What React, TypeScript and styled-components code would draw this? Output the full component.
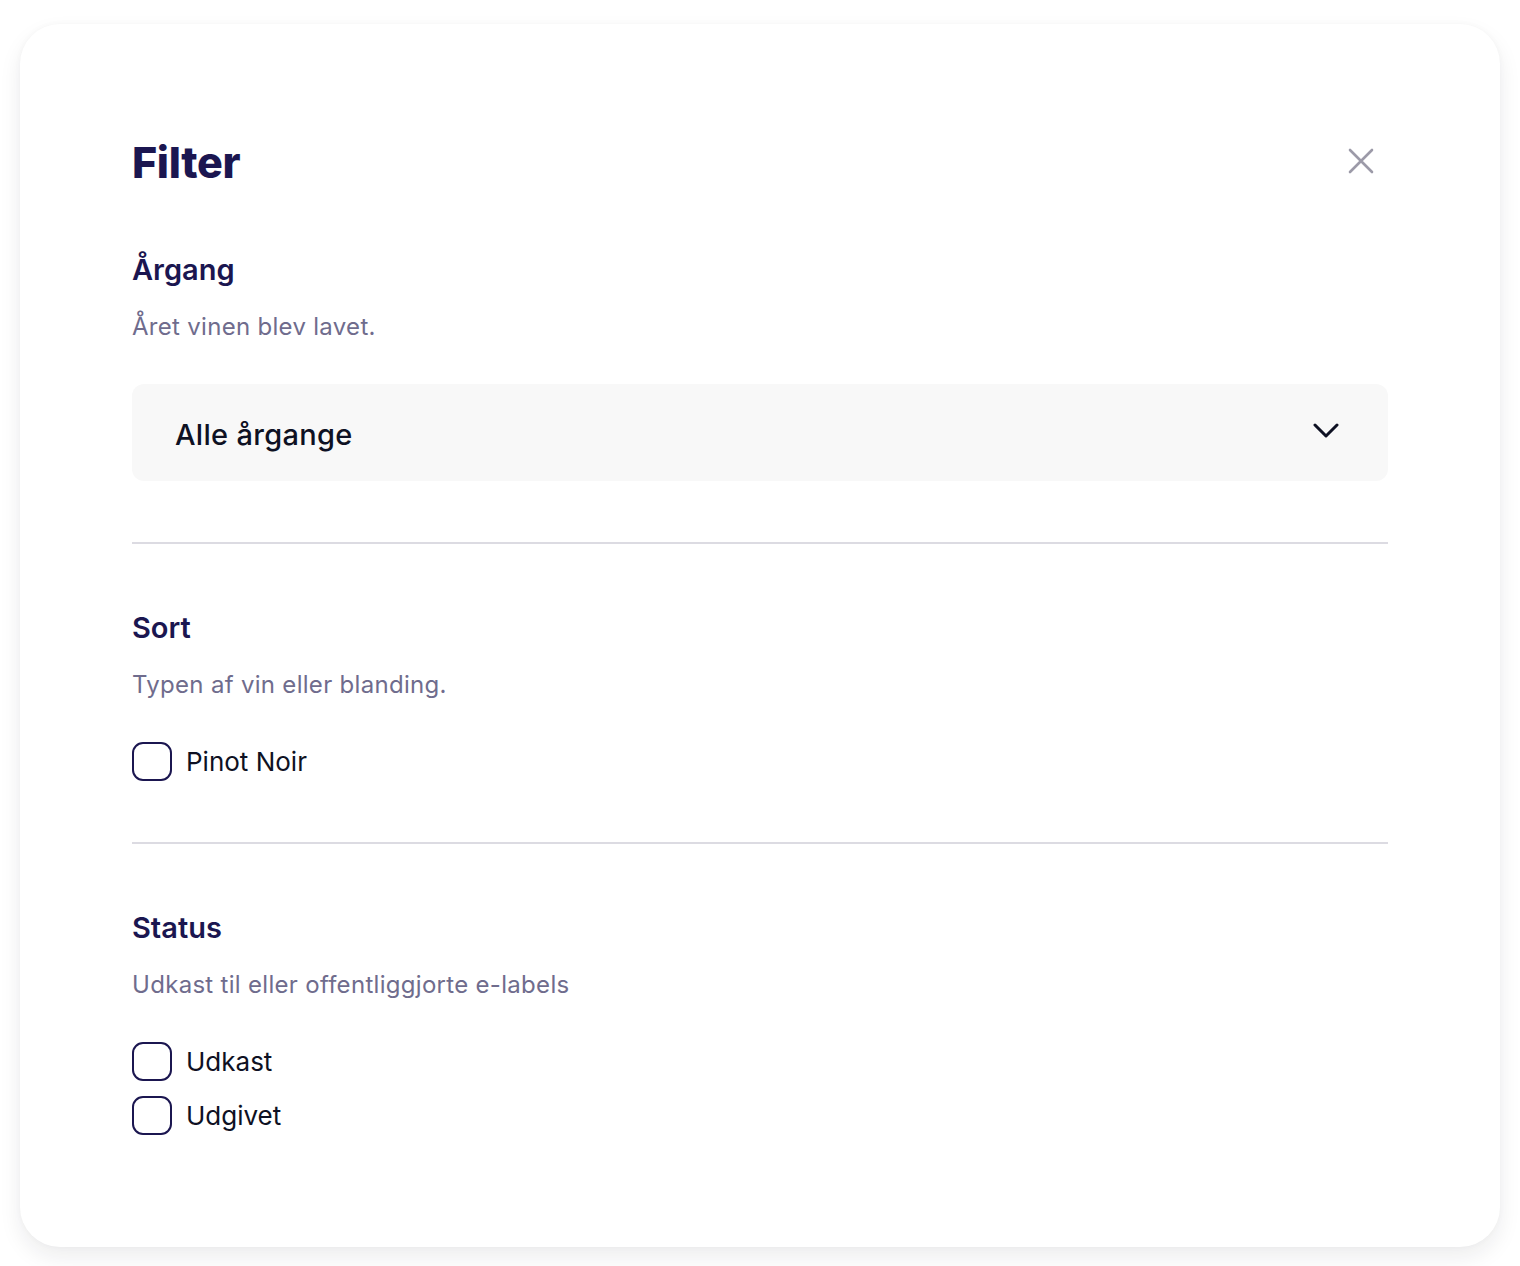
import React from "react";
import styled, { createGlobalStyle } from "styled-components";

const Global = createGlobalStyle`
  html, body { margin: 0; padding: 0; background: #ffffff; }
  body { font-family: "Inter", "Lato", sans-serif; -webkit-font-smoothing: antialiased; }
  * { box-sizing: border-box; }
`;

const Page = styled.div`
  padding: 24px 20px 20px;
`;

const Card = styled.div`
  background: #ffffff;
  border-radius: 40px;
  box-shadow: 0 10px 22px rgba(20, 20, 40, 0.08), 0 0 6px rgba(20, 20, 40, 0.03);
  padding: 112px 112px 112px;
  display: flex;
  flex-direction: column;
`;

const Header = styled.div`
  display: flex;
  align-items: center;
  justify-content: space-between;
  height: 52px;
  margin-bottom: 64px;
`;

const Title = styled.h1`
  margin: 0;
  font-family: "Inter", sans-serif;
  font-size: 43px;
  line-height: 52px;
  font-weight: 800;
  letter-spacing: -0.3px;
  color: #1b1650;
`;

const CloseButton = styled.button`
  border: none;
  background: transparent;
  padding: 0;
  width: 32px;
  height: 32px;
  margin-right: 11px;
  margin-top: -3px;
  display: flex;
  align-items: center;
  justify-content: center;
  cursor: pointer;
`;

const Section = styled.section`
  display: flex;
  flex-direction: column;
`;

const SectionTitle = styled.h2`
  margin: 0;
  font-size: 29px;
  line-height: 36px;
  font-weight: 600;
  color: #1b1650;
  letter-spacing: 0;
`;

const SectionDesc = styled.p`
  margin: 23px 0 41px;
  font-size: 24px;
  line-height: 32px;
  font-weight: 400;
  color: #6f6c8d;
  letter-spacing: 0.3px;
`;

const Select = styled.div`
  height: 97px;
  background: #f8f8f8;
  border-radius: 12px;
  padding: 0 49px 0 43px;
  display: flex;
  align-items: center;
  justify-content: space-between;
`;

const SelectValue = styled.span`
  font-size: 29px;
  font-weight: 500;
  color: #0e1123;
  letter-spacing: 0.3px;
  margin-top: 4px;
`;

const SelectIcon = styled.span`
  display: flex;
  margin-top: -4px;
`;

const Divider = styled.hr`
  border: none;
  height: 2px;
  background: #dcdbe2;
  margin: 61px 0 66px;
`;

const CheckList = styled.div`
  display: flex;
  flex-direction: column;
  gap: 15px;
`;

const CheckRow = styled.label`
  display: flex;
  align-items: center;
  gap: 14px;
  cursor: pointer;
`;

const Box = styled.span`
  width: 40px;
  height: 39px;
  border: 2px solid #1b1650;
  border-radius: 11px;
  flex: none;
`;

const CheckLabel = styled.span`
  font-size: 26px;
  font-weight: 400;
  color: #0e1123;
  letter-spacing: 0;
`;

function CloseIcon() {
  return (
    <svg width="26" height="26" viewBox="0 0 26 26" fill="none">
      <path d="M2 2 L24 24 M24 2 L2 24" stroke="#9c9aa8" strokeWidth="2.6" strokeLinecap="round" />
    </svg>
  );
}

function Chevron() {
  return (
    <svg width="26" height="16" viewBox="0 0 26 16" fill="none">
      <path d="M2 2 L13 13 L24 2" stroke="#0e1123" strokeWidth="3" strokeLinecap="round" strokeLinejoin="round" />
    </svg>
  );
}

function Check({ label }: { label: string }) {
  return (
    <CheckRow>
      <Box />
      <CheckLabel>{label}</CheckLabel>
    </CheckRow>
  );
}

export default function App() {
  return (
    <>
      <Global />
      <Page>
        <Card>
          <Header>
            <Title>Filter</Title>
            <CloseButton aria-label="Luk">
              <CloseIcon />
            </CloseButton>
          </Header>
          <Section>
            <SectionTitle>Årgang</SectionTitle>
            <SectionDesc>Året vinen blev lavet.</SectionDesc>
            <Select>
              <SelectValue>Alle årgange</SelectValue>
              <SelectIcon>
                <Chevron />
              </SelectIcon>
            </Select>
          </Section>
          <Divider />
          <Section>
            <SectionTitle>Sort</SectionTitle>
            <SectionDesc>Typen af vin eller blanding.</SectionDesc>
            <CheckList>
              <Check label="Pinot Noir" />
            </CheckList>
          </Section>
          <Divider />
          <Section>
            <SectionTitle>Status</SectionTitle>
            <SectionDesc>Udkast til eller offentliggjorte e-labels</SectionDesc>
            <CheckList>
              <Check label="Udkast" />
              <Check label="Udgivet" />
            </CheckList>
          </Section>
        </Card>
      </Page>
    </>
  );
}
